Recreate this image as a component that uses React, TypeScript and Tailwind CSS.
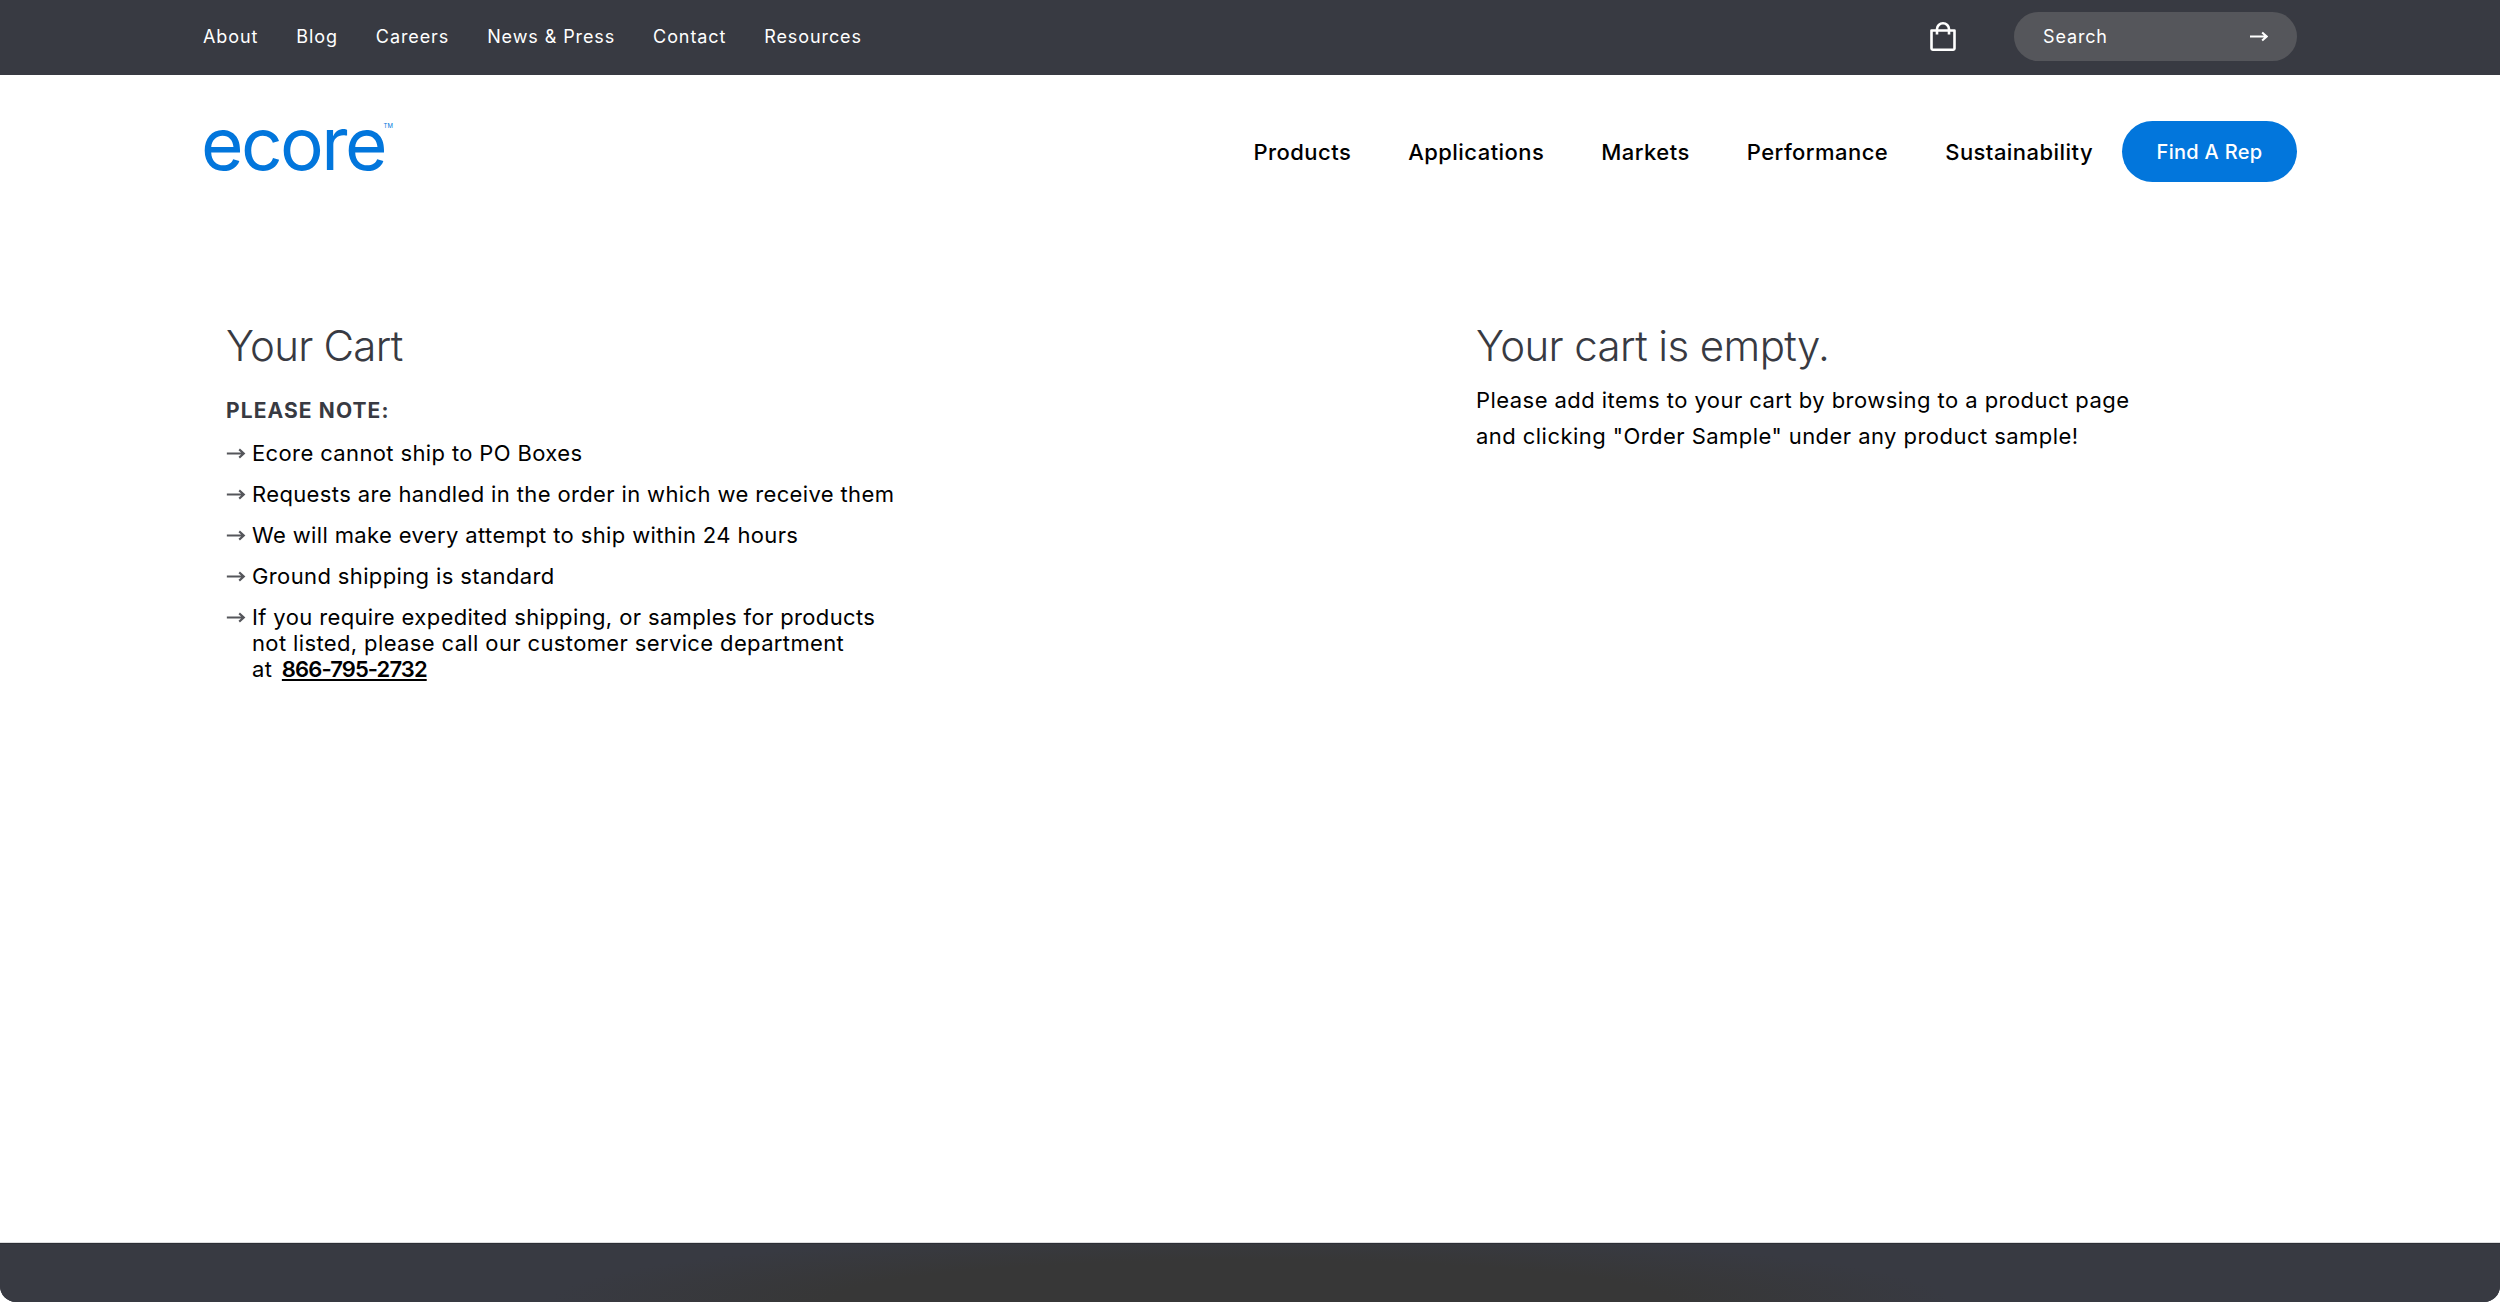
const font = "font-['Inter','Liberation_Sans',sans-serif]";

const topLinks = ["About", "Blog", "Careers", "News & Press", "Contact", "Resources"];
const mainLinks = ["Products", "Applications", "Markets", "Performance", "Sustainability"];
const notes = [
  "Ecore cannot ship to PO Boxes",
  "Requests are handled in the order in which we receive them",
  "We will make every attempt to ship within 24 hours",
  "Ground shipping is standard",
];

function Arrow({ className }: { className: string }) {
  return (
    <svg viewBox="0 0 20 12" fill="none" stroke="currentColor" strokeWidth="2.3" className={className}>
      <path d="M0 6h18.5M13.5 1.5 18.5 6l-5 4.5" />
    </svg>
  );
}

function Note({ children }: { children: React.ReactNode }) {
  return (
    <li className="flex items-start gap-[6px] text-[22px] leading-[26px] tracking-[0.37px] text-black">
      <Arrow className="mt-[8px] h-[11px] w-[20px] shrink-0 text-[#55565b]" />
      <span>{children}</span>
    </li>
  );
}

export default function App() {
  return (
    <div className={`${font} flex h-[1302px] flex-col bg-[#0c0c30]`}>
      <div className="flex h-[75px] items-center justify-between bg-[#383a42] pb-[2px] pl-[203px] pr-[203px]">
        <nav className="flex gap-[38px] text-[18px] tracking-[0.9px] text-white">
          {topLinks.map((link) => (
            <a key={link}>{link}</a>
          ))}
        </nav>
        <div className="flex items-center gap-[58px]">
          <svg viewBox="0 0 26 29" fill="none" stroke="white" strokeWidth="2.6" className="h-[29px] w-[26px]">
            <path d="M1.5 8.5h23v18a1.2 1.2 0 0 1-1.2 1.2H2.7a1.2 1.2 0 0 1-1.2-1.2z" strokeLinejoin="round" />
            <path d="M7 12.5V7a6 5.7 0 0 1 12 0v5.5" />
          </svg>
          <div className="flex h-[49px] w-[283px] items-center justify-between rounded-full bg-[#55565b] px-[29px] text-[18px] tracking-[0.85px] text-white">
            <span>Search</span>
            <Arrow className="h-[11px] w-[18px] text-white" />
          </div>
        </div>
      </div>

      <div className="flex flex-1 flex-col bg-white">
        <header className="flex h-[137px] items-start justify-between pl-[201px] pr-[203px] pt-[42px]">
          <a className="relative block text-[73px] leading-[54px] tracking-[-2.6px] text-[#0276dc]">
            ecore
            <span className="absolute right-[-8px] top-[6px] text-[6px] leading-none tracking-normal">TM</span>
          </a>
          <div className="flex items-center gap-[29px] pt-[4px]">
            <nav className="flex gap-[57px] pt-px text-[22px] font-medium tracking-[0.45px] text-black">
              {mainLinks.map((link) => (
                <a key={link}>{link}</a>
              ))}
            </nav>
            <a className="flex h-[61px] w-[175px] items-center justify-center rounded-full bg-[#0276dc] text-[20px] font-medium tracking-[0.3px] text-white">
              Find A Rep
            </a>
          </div>
        </header>

        <main className="flex flex-1 pl-[226px] pt-[104px]">
          <section className="w-[1250px]">
            <h1 className="text-[42px] font-[350] leading-[60px] tracking-[-0.75px] text-[#383a42]">Your Cart</h1>
            <p className="mt-[22px] text-[21px] font-bold leading-[26px] tracking-[1.1px] text-[#383a42]">PLEASE NOTE:</p>
            <ul className="mt-[16px] flex flex-col gap-[15px]">
              {notes.map((note) => (
                <Note key={note}>{note}</Note>
              ))}
              <Note>
                If you require expedited shipping, or samples for products
                <br />
                not listed, please call our customer service department
                <br />
                at <a className="ml-[3px] font-semibold tracking-[-0.9px] underline">866-795-2732</a>
              </Note>
            </ul>
          </section>
          <section>
            <h2 className="text-[42px] font-[350] leading-[60px] tracking-[-0.6px] text-[#383a42]">Your cart is empty.</h2>
            <p className="mt-[6px] text-[22px] leading-[36px] tracking-[0.45px] text-black">
              Please add items to your cart by browsing to a product page
              <br />
              and clicking "Order Sample" under any product sample!
            </p>
          </section>
        </main>
      </div>

      <div className="bg-white">
        <footer className="h-[59px] rounded-b-[16px] border-t border-t-[#2c2e35] bg-[#383a42] bg-[radial-gradient(ellipse_700px_70px_at_50%_100%,#373737_60%,#383a42_100%)] shadow-[0_-1px_0_#dcdcde]" />
      </div>
    </div>
  );
}
